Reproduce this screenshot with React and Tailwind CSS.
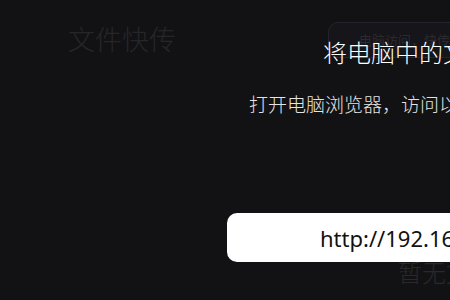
export default function App() {
  const font = { fontFamily: '"Noto Sans", "Noto Sans CJK SC", sans-serif' };
  return (
    <div
      className="relative w-[450px] h-[300px] overflow-hidden bg-[#121214]"
      style={font}
    >
      {/* page behind the overlay */}
      <div className="flex items-start pl-[68px] pt-[26px]">
        <h1 className="text-[27px] leading-none font-light text-[#26262a] whitespace-nowrap">
          文件快传
        </h1>
        <div className="ml-auto mr-[-20px] mt-[-4px] w-[142px] h-[36px] shrink-0 rounded-[10px] border border-[#23232b] bg-[#15151a] pl-[30px] pt-[8px] text-[13px] text-[#2a2a31] whitespace-nowrap">
          电脑访问，快传
        </div>
      </div>
      <div className="absolute left-[398px] top-[261px] text-[24px] leading-none font-light text-[#29292c] whitespace-nowrap">
        暂无文件
      </div>

      {/* overlay */}
      <div className="absolute inset-0 flex flex-col items-start">
        <p className="ml-[323px] mt-[41px] text-[24px] leading-none font-light text-white whitespace-nowrap">
          将电脑中的文件传到手机
        </p>
        <p className="ml-[249px] mt-[31px] text-[19px] leading-none font-light text-[#e4e4e4] whitespace-nowrap">
          打开电脑浏览器，访问以下地址
        </p>
        <div className="ml-[227px] mt-[98px] w-[520px] h-[49px] shrink-0 rounded-[10px] bg-white flex items-center pl-[93px]">
          <span className="text-[22px] leading-none text-[#111] whitespace-nowrap">
            http://192.168.1.5:8080
          </span>
        </div>
      </div>
    </div>
  );
}
